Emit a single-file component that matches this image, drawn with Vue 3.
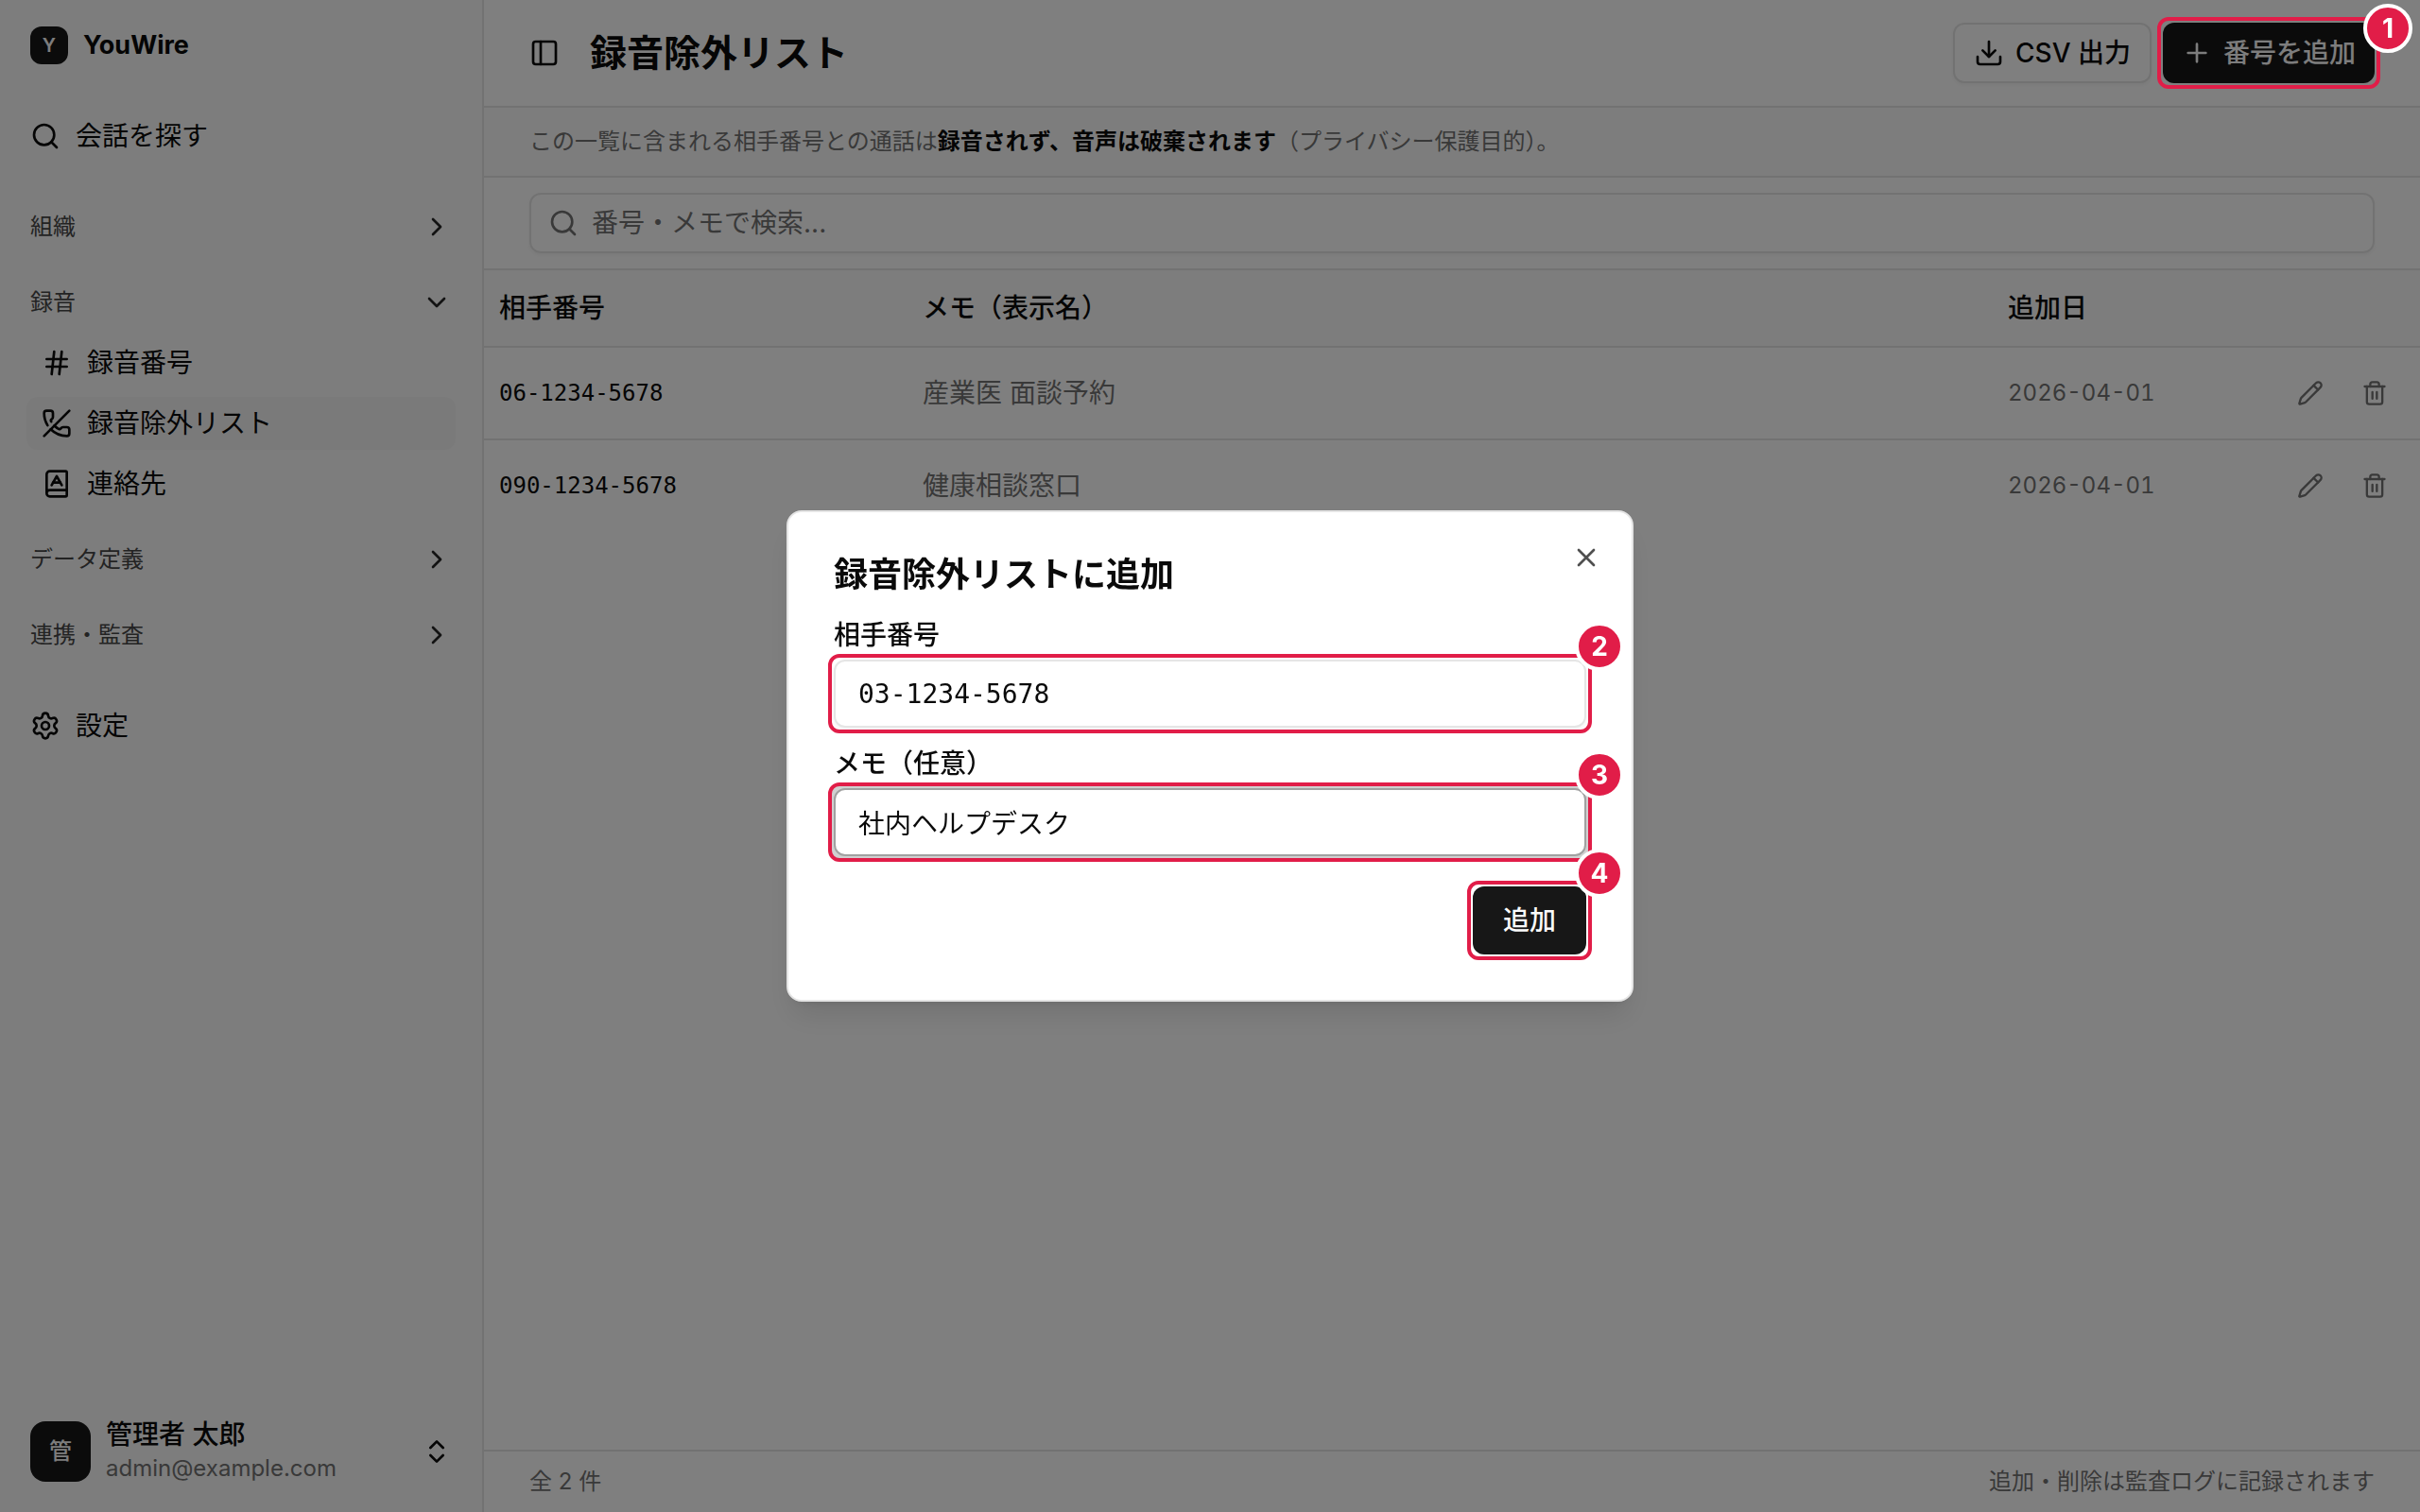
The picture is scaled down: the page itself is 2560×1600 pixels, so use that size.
<template>
  <div class="app">
    <aside class="sidebar">
      <div class="brand"><span class="brand-mark">Y</span><b>YouWire</b></div>

      <nav class="nav">
        <a class="nav-link" href="#search"><Icon name="search" />会話を探す</a>
        <div class="groups">
          <div v-for="group in groups" :key="group.label" class="group">
            <button class="group-head" :aria-expanded="!!group.items">
              {{ group.label }}<Icon :name="group.items ? 'chevronDown' : 'chevronRight'" />
            </button>
            <ul v-if="group.items">
              <li v-for="item in group.items" :key="item.label">
                <a class="sub-link" :class="{ active: item.active }" href="#"><Icon :name="item.icon" />{{ item.label }}</a>
              </li>
            </ul>
          </div>
        </div>
        <a class="nav-link" href="#settings"><Icon name="settings" />設定</a>
      </nav>

      <button class="user">
        <span class="avatar">管</span>
        <span class="user-info"><b>管理者 太郎</b><small>admin@example.com</small></span>
        <Icon name="chevronsUpDown" />
      </button>
    </aside>

    <main class="main">
      <header class="page-head">
        <button class="toggle" aria-label="サイドバー"><Icon name="panelLeft" /></button>
        <h1>録音除外リスト</h1>
        <button class="btn outline"><Icon name="download" />CSV 出力</button>
        <div class="step low">
          <button class="btn primary"><Icon name="plus" />番号を追加</button>
          <i class="step-ring"></i><span class="step-no">1</span>
        </div>
      </header>

      <p class="notice">この一覧に含まれる相手番号との通話は<strong>録音されず、音声は破棄されます</strong>（プライバシー保護目的）。</p>

      <div class="search-bar">
        <label class="search-box">
          <Icon name="search" />
          <input v-model="keyword" type="text" placeholder="番号・メモで検索..." aria-label="番号・メモで検索" />
        </label>
      </div>

      <table>
        <thead>
          <tr><th class="col-number">相手番号</th><th>メモ（表示名）</th><th class="col-date">追加日</th><th class="col-actions"></th></tr>
        </thead>
        <tbody>
          <tr v-for="row in rows" :key="row.number">
            <td class="number">{{ row.number }}</td>
            <td class="memo">{{ row.memo }}</td>
            <td class="date">{{ row.date }}</td>
            <td>
              <div class="actions">
                <button aria-label="編集"><Icon name="pencil" /></button>
                <button aria-label="削除"><Icon name="trash" /></button>
              </div>
            </td>
          </tr>
        </tbody>
      </table>

      <footer class="page-foot"><span>全 {{ rows.length }} 件</span><span>追加・削除は監査ログに記録されます</span></footer>
    </main>

    <div class="overlay">
      <form class="dialog" role="dialog" aria-labelledby="dialog-title" @submit.prevent>
        <h2 id="dialog-title">録音除外リストに追加</h2>
        <button type="button" class="close" aria-label="閉じる"><Icon name="x" /></button>
        <div class="field">
          <label for="number">相手番号</label>
          <div class="step">
            <input id="number" v-model="form.number" class="mono" type="text" />
            <i class="step-ring"></i><span class="step-no">2</span>
          </div>
        </div>
        <div class="field">
          <label for="memo">メモ（任意）</label>
          <div class="step">
            <input id="memo" v-model="form.memo" class="focused" type="text" />
            <i class="step-ring"></i><span class="step-no">3</span>
          </div>
        </div>
        <div class="dialog-foot">
          <div class="step">
            <button class="submit">追加</button>
            <i class="step-ring"></i><span class="step-no">4</span>
          </div>
        </div>
      </form>
    </div>
  </div>
</template>

<script setup>
import { h, reactive, ref } from 'vue'

const paths = {
  search: '<circle cx="11" cy="11" r="8"/><path d="m21 21-4.3-4.3"/>',
  chevronRight: '<path d="m9 18 6-6-6-6"/>',
  chevronDown: '<path d="m6 9 6 6 6-6"/>',
  chevronsUpDown: '<path d="m7 15 5 5 5-5"/><path d="m7 9 5-5 5 5"/>',
  hash: '<path d="M4 9h16M4 15h16M10 3 8 21M16 3l-2 18"/>',
  phoneOff: '<path d="M10.1 13.9a14 14 0 0 0 3.732 2.668 1 1 0 0 0 1.213-.303l.355-.465A2 2 0 0 1 17 15h3a2 2 0 0 1 2 2v3a2 2 0 0 1-2 2 18 18 0 0 1-12.728-5.272"/><path d="M22 2 2 22"/><path d="M4.76 13.582A18 18 0 0 1 2 4a2 2 0 0 1 2-2h3a2 2 0 0 1 2 2v3a2 2 0 0 1-.8 1.6l-.468.351a1 1 0 0 0-.292 1.233 14 14 0 0 0 .244.473"/>',
  book: '<path d="M4 19.5v-15A2.5 2.5 0 0 1 6.5 2H19a1 1 0 0 1 1 1v18a1 1 0 0 1-1 1H6.5a1 1 0 0 1 0-5H20"/><path d="m8 13 4-7 4 7"/><path d="M9.1 11h5.7"/>',
  settings: '<path d="M9.671 4.136a2.34 2.34 0 0 1 4.659 0 2.34 2.34 0 0 0 3.319 1.915 2.34 2.34 0 0 1 2.33 4.033 2.34 2.34 0 0 0 0 3.831 2.34 2.34 0 0 1-2.33 4.033 2.34 2.34 0 0 0-3.319 1.915 2.34 2.34 0 0 1-4.659 0 2.34 2.34 0 0 0-3.32-1.915 2.34 2.34 0 0 1-2.33-4.033 2.34 2.34 0 0 0 0-3.831A2.34 2.34 0 0 1 6.35 6.051a2.34 2.34 0 0 0 3.319-1.915"/><circle cx="12" cy="12" r="3"/>',
  panelLeft: '<rect width="18" height="18" x="3" y="3" rx="2"/><path d="M9 3v18"/>',
  download: '<path d="M12 15V3"/><path d="M21 15v4a2 2 0 0 1-2 2H5a2 2 0 0 1-2-2v-4"/><path d="m7 10 5 5 5-5"/>',
  plus: '<path d="M5 12h14M12 5v14"/>',
  pencil: '<path d="M21.174 6.812a1 1 0 0 0-3.986-3.987L3.842 16.174a2 2 0 0 0-.5.83l-1.321 4.352a.5.5 0 0 0 .623.622l4.353-1.32a2 2 0 0 0 .83-.497z"/><path d="m15 5 4 4"/>',
  trash: '<path d="M3 6h18"/><path d="M19 6v14a2 2 0 0 1-2 2H7a2 2 0 0 1-2-2V6"/><path d="M8 6V4a2 2 0 0 1 2-2h4a2 2 0 0 1 2 2v2"/><path d="M10 11v6M14 11v6"/>',
  x: '<path d="M18 6 6 18M6 6l12 12"/>'
}

const Icon = ({ name }) => h('svg', { class: 'icon', viewBox: '0 0 24 24', 'aria-hidden': 'true', innerHTML: paths[name] })
Icon.props = ['name']

const groups = [
  { label: '組織' },
  {
    label: '録音',
    items: [
      { label: '録音番号', icon: 'hash' },
      { label: '録音除外リスト', icon: 'phoneOff', active: true },
      { label: '連絡先', icon: 'book' }
    ]
  },
  { label: 'データ定義' },
  { label: '連携・監査' }
]

const rows = [
  { number: '06-1234-5678', memo: '産業医 面談予約', date: '2026-04-01' },
  { number: '090-1234-5678', memo: '健康相談窓口', date: '2026-04-01' }
]

const keyword = ref('')
const form = reactive({ number: '03-1234-5678', memo: '社内ヘルプデスク' })
</script>

<style>
body{margin:0;overflow:hidden}
</style>

<style scoped>
*{box-sizing:border-box}
.app{display:flex;height:100vh;background:#fff;color:#0a0a0a;font-family:Inter,"Noto Sans CJK JP",sans-serif;font-size:28px;line-height:40px}
button,input{font:inherit;color:inherit}
button{border:0;background:transparent;padding:0;cursor:pointer}
a{color:inherit;text-decoration:none}
ul{list-style:none;margin:0;padding:0}
.icon{flex:none;display:block;width:32px;height:32px;fill:none;stroke:currentColor;stroke-width:2;stroke-linecap:round;stroke-linejoin:round}

.sidebar{flex:none;width:512px;display:flex;flex-direction:column;padding:28px 32px;background:#fafafa;border-right:2px solid #e5e5e5}
.brand{display:flex;align-items:center;gap:16px;margin-bottom:48px}
.brand b{font-size:27px;font-weight:700}
.brand-mark{display:grid;place-items:center;width:40px;height:40px;border-radius:12px;background:#171717;color:#fafafa;font-size:20px;font-weight:600}
.nav{flex:1;display:flex;flex-direction:column;gap:40px}
.nav-link{display:flex;align-items:center;gap:16px;height:56px}
.groups{display:flex;flex-direction:column;gap:24px}
.group-head{display:flex;align-items:center;justify-content:space-between;width:100%;height:56px;color:#474747;font-size:24px}
.group-head .icon{color:#262626}
.group ul{display:flex;flex-direction:column;gap:8px;margin:8px -4px 0}
.sub-link{display:flex;align-items:center;gap:16px;height:56px;padding:0 16px;border-radius:12px}
.sub-link.active{background:#f5f5f5}
.user{display:flex;align-items:center;gap:16px;text-align:left}
.avatar{display:grid;place-items:center;width:64px;height:64px;border-radius:16px;background:#171717;color:#fafafa;font-size:24px;font-weight:500}
.user-info{flex:1;display:flex;flex-direction:column}
.user-info b{font-weight:500;line-height:36px}
.user-info small{color:#737373;font-size:24px;line-height:36px}

.main{flex:1;min-width:0;display:flex;flex-direction:column}
.page-head{display:flex;align-items:center;gap:12px;height:114px;padding:0 48px;border-bottom:2px solid #e5e5e5}
.page-head h1{flex:1;margin:0 0 0 20px;font-size:39px;line-height:56px;font-weight:600}
.btn{display:flex;align-items:center;gap:12px;height:64px;padding:0 20px;border-radius:12px;font-weight:500}
.btn.outline{border:2px solid #e5e5e5;background:#fff;box-shadow:0 2px 4px rgba(0,0,0,.05)}
.btn.primary{background:#171717;color:#fafafa}
.notice{margin:0;padding:16px 48px;border-bottom:2px solid #e5e5e5;background:#fafafa;color:#737373;font-size:24px}
.notice strong{color:#0a0a0a;font-weight:700}
.search-bar{padding:16px 48px;border-bottom:2px solid #e5e5e5}
.search-box{display:flex;align-items:center;gap:12px;height:64px;padding:0 18px;border:2px solid #e5e5e5;border-radius:12px;box-shadow:0 2px 4px rgba(0,0,0,.05);color:#737373}
.search-box input{flex:1;height:40px;padding:0 2px;border:0;outline:0;background:transparent}
.search-box input::placeholder{color:#737373}

table{width:100%;table-layout:fixed;border-collapse:separate;border-spacing:0}
th{height:82px;padding:0 16px;border-bottom:2px solid #e5e5e5;background:#fafafa;text-align:left;font-weight:500}
td{height:98px;padding:0 16px;border-bottom:2px solid #e5e5e5}
tbody tr:last-child td{border-bottom-color:transparent}
.col-number{width:448px}
.col-date{width:260px}
.col-actions{width:192px}
.number{font-family:"DejaVu Sans Mono",monospace;font-size:24px}
.memo{color:#737373}
.date{color:#737373;font-size:24px;font-variant-numeric:tabular-nums}
.actions{display:flex;justify-content:flex-end;gap:4px}
.actions button{display:grid;place-items:center;width:64px;height:64px;color:#737373}
.actions .icon{width:28px;height:28px}
.page-foot{display:flex;justify-content:space-between;margin-top:auto;padding:12px 48px;border-top:2px solid #e5e5e5;color:#737373;font-size:24px}

.overlay{position:fixed;inset:0;z-index:10;display:grid;place-items:center;background:rgba(0,0,0,.5)}
.dialog{position:relative;width:min(896px,92vw);padding:48px;border:2px solid #e5e5e5;border-radius:16px;background:#fff;box-shadow:0 20px 30px -6px rgba(0,0,0,.1),0 8px 12px -8px rgba(0,0,0,.1)}
.dialog h2{margin:0 0 24px;font-size:36px;line-height:36px;font-weight:600}
.close{position:absolute;top:32px;right:32px;color:#4f4f4f}
.field{display:flex;flex-direction:column;gap:4px;margin-bottom:16px}
.field label{line-height:44px;font-weight:500}
.field input{display:block;width:100%;height:72px;padding:0 24px;border:2px solid #e5e5e5;border-radius:12px;outline:0;background:#fff;box-shadow:0 2px 4px rgba(0,0,0,.05)}
.field input.mono{font-family:"DejaVu Sans Mono",monospace}
.field input.focused{border-color:#a1a1a1;box-shadow:0 0 0 6px rgba(161,161,161,.5)}
.dialog-foot{display:flex;justify-content:flex-end;margin-top:32px}
.submit{display:block;height:72px;padding:0 32px;border-radius:12px;background:#171717;color:#fafafa;font-weight:500}

/* numbered guide markers, drawn above the overlay */
.step{position:relative}
.step-ring{position:absolute;inset:-6px;z-index:20;border:4px solid #e11d48;border-radius:12px;pointer-events:none}
.step-no{position:absolute;top:-40px;right:-40px;z-index:21;display:grid;place-items:center;width:52px;height:52px;border:4px solid #fff;border-radius:50%;background:#e11d48;color:#fff;font-size:28px;font-weight:700}
.step.low .step-no{top:-20px}
</style>
